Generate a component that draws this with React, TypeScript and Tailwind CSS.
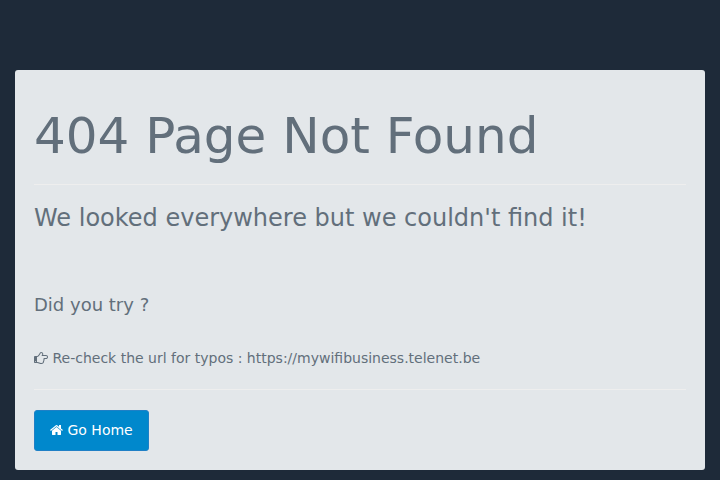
function HandIcon() {
  return (
    <svg className="h-[14px] w-[14px] shrink-0" viewBox="0 0 1792 1792" fill="currentColor" fillRule="evenodd" aria-hidden="true">
      <path d="M256 1344q0-26-19-45t-45-19-45 19-19 45 19 45 45 19 45-19 19-45zM1664 768q0-51-39-89.5t-89-38.5h-576q0-20 15-48.5t33-55 33-68 15-84.5q0-67-44.5-97.5t-115.5-30.5q-24 0-90 139-24 44-37 65-40 64-112 145-71 81-101 106-69 57-140 57h-32v640h32q72 0 167 32t193.5 64 179.5 32q189 0 189-167 0-26-5-56 30-16 47.5-52.5t17.5-73.5-18-69q53-50 53-119 0-25-10-55.5t-25-47.5h331q52 0 90-38t38-90zM1792 767q0 105-75.5 181t-180.5 76h-169q-4 62-37 119 3 21 3 43 0 101-60 178 1 139-85 219.5t-227 80.5q-133 0-322-69-164-59-223-59h-288q-53 0-90.5-37.5t-37.5-90.5v-640q0-53 37.5-90.5t90.5-37.5h288q10 0 21.5-4.5t23.5-14 22.5-18 24-22.5 20.5-21.5 19-21.5 14-17q65-74 100-129 13-21 33-62t37-72 40.5-63 55-49.5 69.5-17.5q125 0 206.5 67t81.5 189q0 68-22 128h374q104 0 180 76t76 179z" />
    </svg>
  );
}

function HomeIcon() {
  return (
    <svg className="h-[14px] w-[13px] shrink-0" viewBox="0 0 1664 1792" fill="currentColor" aria-hidden="true">
      <path d="M1408 992v480q0 26-19 45t-45 19h-384v-384h-256v384h-384q-26 0-45-19t-19-45v-480q0-1 .5-3t.5-3l575-474 575 474q1 2 1 6zm223-69l-62 74q-8 9-21 11h-3q-13 0-21-7l-692-577-692 577q-12 8-24 7-13-2-21-11l-62-74q-8-10-7-23.5t11-21.5l719-599q32-26 76-26t76 26l244 204v-195q0-14 9-23t23-9h192q14 0 23 9t9 23v408l219 182q10 8 11 21.5t-7 23.5z" />
    </svg>
  );
}

export default function App() {
  return (
    <div className="h-[480px] overflow-hidden bg-[#1e2a39] px-[15px] pt-[70px] font-['DejaVu_Sans',sans-serif] text-[14px] leading-[20px] text-[#626f7b]">
      <main className="h-[400px] rounded-[3px] bg-[#e3e7ea] px-[19px] pt-[39px]">
        <h1 className="text-[50px] leading-[55px]">404 Page Not Found</h1>
        <hr className="mt-[20px] border-[#eeeeee]" />
        <h2 className="mt-[20px] text-[24px] leading-[26px]">We looked everywhere but we couldn't find it!</h2>
        <h3 className="mt-[64px] text-[18px] leading-[20px]">Did you try ?</h3>
        <p className="mt-[33px] flex items-center gap-[4.45px]">
          <HandIcon />
          Re-check the url for typos : https://mywifibusiness.telenet.be
        </p>
        <hr className="mt-[21px] border-[#eeeeee]" />
        <a className="mt-[20px] flex h-[41px] w-[115px] items-center justify-center gap-[4.2px] rounded-[3px] border border-[#1f80c6] bg-[#0088cc] pb-px text-white">
          <HomeIcon />
          Go Home
        </a>
      </main>
    </div>
  );
}
